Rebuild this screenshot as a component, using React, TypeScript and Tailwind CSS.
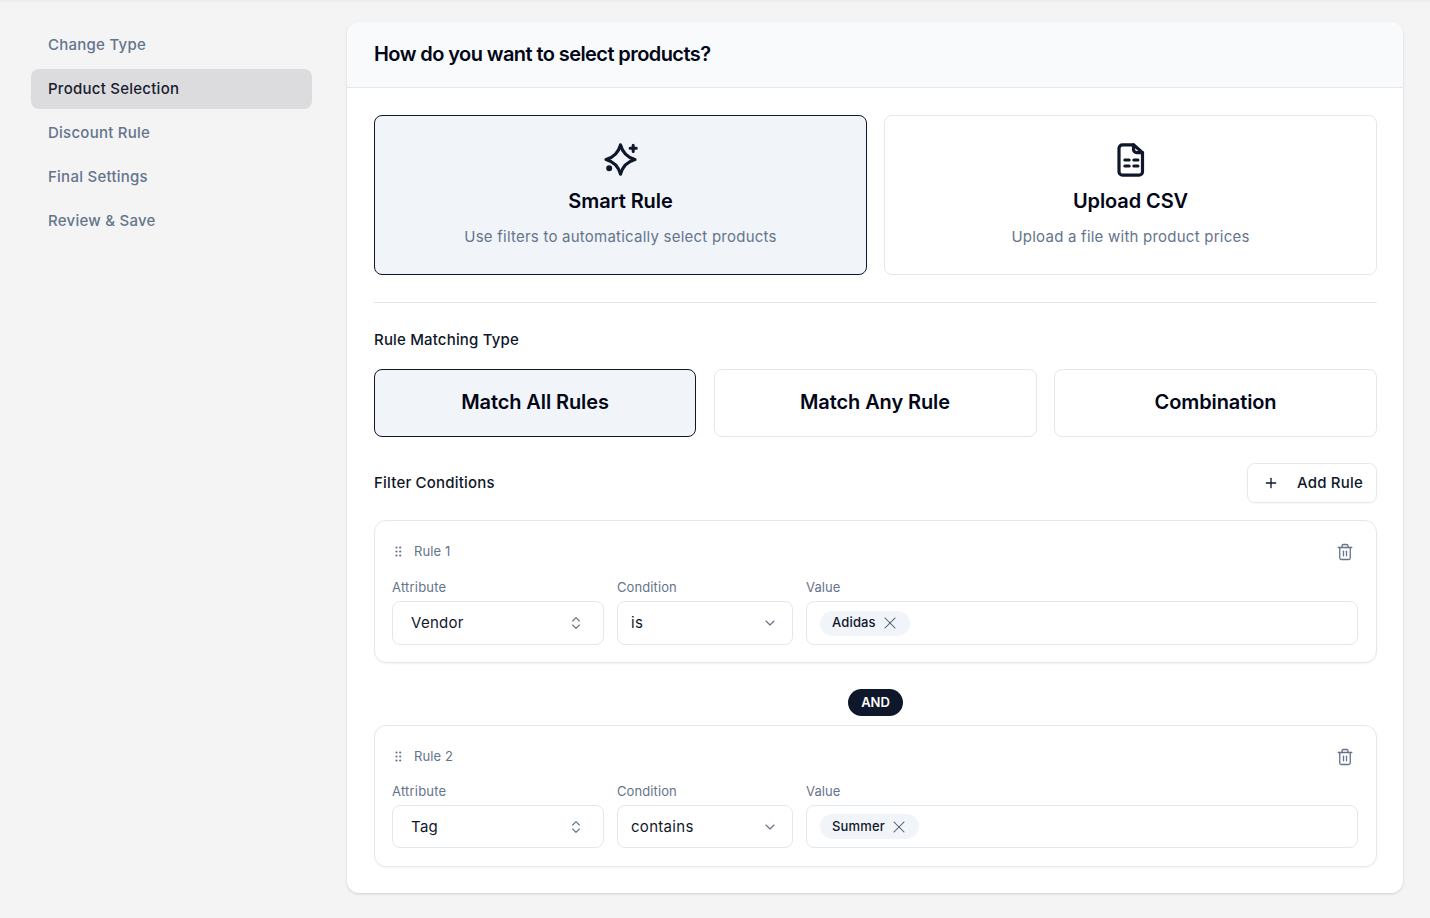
import React from 'react';
import { ChevronDown, ChevronsUpDown, Plus, Trash2, X } from 'lucide-react';

const steps = ['Change Type', 'Product Selection', 'Discount Rule', 'Final Settings', 'Review & Save'];

const GripDots = () => (
  <svg width="7" height="11" viewBox="0 0 7 11" className="text-[#64748b] -translate-y-[1px]" fill="currentColor">
    <circle cx="1.5" cy="1.5" r="1.1" />
    <circle cx="5.2" cy="1.5" r="1.1" />
    <circle cx="1.5" cy="5.5" r="1.1" />
    <circle cx="5.2" cy="5.5" r="1.1" />
    <circle cx="1.5" cy="9.5" r="1.1" />
    <circle cx="5.2" cy="9.5" r="1.1" />
  </svg>
);

const SparkleIcon = () => (
  <svg width="36" height="36" viewBox="0 0 36 36" fill="none" stroke="currentColor" strokeLinecap="round" strokeLinejoin="round" className="text-[#0f172a]">
    <path d="M17.5 3.8Q20.6 15.4 32 18.5Q20.6 21.6 17.5 33.2Q14.4 21.6 3 18.5Q14.4 15.4 17.5 3.8Z" strokeWidth="3.2" />
    <path d="M30.2 4.2v6.2M27.1 7.3h6.2" strokeWidth="3" />
    <circle cx="6.2" cy="27.3" r="2" fill="currentColor" strokeWidth="2" />
  </svg>
);

const FileIcon = () => (
  <svg width="36" height="36" viewBox="0 0 36 36" fill="none" stroke="currentColor" strokeLinecap="round" strokeLinejoin="round" className="text-[#0f172a]">
    <path d="M20.5 3.8H9.5A3.5 3.5 0 0 0 6 7.3v23.4a3.5 3.5 0 0 0 3.5 3.5h16.5a3.5 3.5 0 0 0 3.5-3.5V11.6z" strokeWidth="3.2" />
    <path d="M20.5 3.8v4.8a3 3 0 0 0 3 3h6" strokeWidth="3.2" />
    <path d="M11.8 19h4.4M20.8 19h4.2M11.8 25h4.4M20.8 25h4.2" strokeWidth="3" />
  </svg>
);

type RuleProps = {
  name: string;
  attribute: string;
  condition: string;
  value: string;
  labelClass: string;
  fieldClass: string;
  cardClass: string;
  textClass?: string;
};

const RuleCard = ({ name, attribute, condition, value, labelClass, fieldClass, cardClass, textClass }: RuleProps) => (
  <div className={`border border-[#e2e8f0] rounded-xl shadow-[0_1px_2px_rgba(0,0,0,0.05)] pl-[17px] pr-[18px] ${cardClass}`}>
    <div className="flex items-center justify-between h-[22px] translate-y-[1px]">
      <div className="flex items-center gap-[12px] pl-[3px] text-[13px] tracking-[0.1px] text-[#64748b]">
        <GripDots />
        <span>{name}</span>
      </div>
      <Trash2 size={18} strokeWidth={1.75} className="text-[#64748b] mr-[4px]" />
    </div>
    <div className={`flex gap-[13px] ${labelClass}`}>
      <div className="w-[212px]">
        <div className="text-[13px] leading-[20px] tracking-[0.2px] text-[#64748b] mb-[4px]">Attribute</div>
        <div className={`flex items-center justify-between border border-[#e2e8f0] rounded-lg pl-[18px] pr-[19px] text-[15px] tracking-[0.3px] text-[#0f172a] ${fieldClass}`}>
          <span className={textClass}>{attribute}</span>
          <ChevronsUpDown size={16} strokeWidth={1.75} className="text-[#64748b]" />
        </div>
      </div>
      <div className="w-[176px]">
        <div className="text-[13px] leading-[20px] tracking-[0.1px] text-[#64748b] mb-[4px]">Condition</div>
        <div className={`flex items-center justify-between border border-[#e2e8f0] rounded-lg pl-[13px] pr-[14px] text-[15px] tracking-[0.3px] text-[#0f172a] ${fieldClass}`}>
          <span className={textClass}>{condition}</span>
          <ChevronDown size={16} strokeWidth={1.75} className="text-[#64748b]" />
        </div>
      </div>
      <div className="flex-1">
        <div className="text-[13px] leading-[20px] tracking-[0.1px] text-[#64748b] mb-[4px]">Value</div>
        <div className={`flex items-center border border-[#e2e8f0] rounded-lg pl-[13px] ${fieldClass}`}>
          <span className="flex items-center gap-[4px] h-[25px] pl-[12px] pr-[10px] rounded-full bg-[#f1f5f9] text-[13px] tracking-[0.15px] font-medium text-[#0f172a]">
            {value}
            <X size={20} strokeWidth={1.25} className="text-[#475569]" />
          </span>
        </div>
      </div>
    </div>
  </div>
);

export default function App() {
  return (
    <div className="min-h-[918px] bg-[#f4f4f5] font-['Inter',sans-serif] relative">
      <div className="absolute top-0 left-0 right-0 h-[2px] bg-[#ececee]" />
      <div className="flex pl-[31px] pt-[22px] gap-[35px]">
        {/* Sidebar */}
        <div className="w-[281px] pt-[3px] flex flex-col gap-[4px]">
          {steps.map((step) => (
            <div
              key={step}
              className={`h-[40px] flex items-center px-[17px] rounded-lg text-[15px] tracking-[0.25px] font-medium ${
                step === 'Product Selection' ? 'bg-[#dcdcdf] text-[#18202f]' : 'text-[#64748b]'
              }`}
            >
              {step}
            </div>
          ))}
        </div>

        {/* Main card */}
        <div className="w-[1056px] bg-white rounded-xl shadow-[0_1px_3px_rgba(0,0,0,0.1),0_1px_2px_rgba(0,0,0,0.06)] overflow-hidden">
          <div className="h-[66px] pb-[2px] bg-[#f8fafc] border-b border-[#e2e8f0] flex items-center px-[27px]">
            <h2 className="text-[20px] font-semibold tracking-[-0.58px] text-[#020617]">How do you want to select products?</h2>
          </div>

          <div className="pl-[27px] pr-[26px] pt-[27px] pb-[26px]">
            <div className="grid grid-cols-2 gap-[17px]">
              <div className="h-[160px] border border-[#0f172a] bg-[#f1f5f9] rounded-lg flex flex-col items-center pt-[25px]">
                <SparkleIcon />
                <div className="mt-[8px] text-[20px] leading-[32px] font-semibold tracking-[-0.1px] text-[#020617]">Smart Rule</div>
                <div className="mt-[8px] text-[15px] leading-[24px] tracking-[0.23px] text-[#64748b]">Use filters to automatically select products</div>
              </div>
              <div className="h-[160px] border border-[#e2e8f0] rounded-lg flex flex-col items-center pt-[25px]">
                <FileIcon />
                <div className="mt-[8px] text-[20px] leading-[32px] font-semibold tracking-[-0.1px] text-[#020617]">Upload CSV</div>
                <div className="mt-[8px] text-[15px] leading-[24px] tracking-[0.23px] text-[#64748b]">Upload a file with product prices</div>
              </div>
            </div>

            <div className="h-px bg-[#e2e8f0] mt-[27px]" />

            <div className="mt-[27px] text-[15px] leading-[20px] tracking-[0.17px] font-medium text-[#0f172a]">Rule Matching Type</div>
            <div className="grid grid-cols-[322px_323px_323px] gap-[17.5px] mt-[19px]">
              <div className="h-[68px] pb-[2px] border border-[#0f172a] bg-[#f1f5f9] rounded-lg flex items-center justify-center text-[20px] font-semibold tracking-[-0.1px] text-[#020617]">Match All Rules</div>
              <div className="h-[68px] pb-[2px] border border-[#e2e8f0] rounded-lg flex items-center justify-center text-[20px] font-semibold tracking-[-0.1px] text-[#020617]">Match Any Rule</div>
              <div className="h-[68px] pb-[2px] border border-[#e2e8f0] rounded-lg flex items-center justify-center text-[20px] font-semibold tracking-[-0.1px] text-[#020617]">Combination</div>
            </div>

            <div className="flex items-center justify-between mt-[26px]">
              <span className="text-[15px] tracking-[0.2px] font-medium text-[#0f172a]">Filter Conditions</span>
              <button className="h-[40px] w-[130px] border border-[#e2e8f0] rounded-lg shadow-[0_1px_2px_rgba(0,0,0,0.04)] flex items-center pl-[15px] gap-[18px] text-[15px] tracking-[0.2px] font-medium text-[#0f172a]">
                <Plus size={16} strokeWidth={2} />
                Add Rule
              </button>
            </div>

            <div className="mt-[17px]">
              <RuleCard name="Rule 1" attribute="Vendor" condition="is" value="Adidas" cardClass="h-[143px] pt-[19px]" labelClass="mt-[15px]" fieldClass="h-[44px]" />
            </div>
            <div className="flex justify-center mt-[26px]">
              <span className="h-[27px] w-[55px] rounded-full bg-[#0f172a] text-white text-[13px] font-semibold flex items-center justify-center">AND</span>
            </div>
            <div className="mt-[9px]">
              <RuleCard name="Rule 2" attribute="Tag" condition="contains" value="Summer" cardClass="h-[142px] pt-[19px]" labelClass="mt-[14px]" fieldClass="h-[43px]" textClass="pt-[2px]" />
            </div>
          </div>
        </div>
      </div>
    </div>
  );
}
